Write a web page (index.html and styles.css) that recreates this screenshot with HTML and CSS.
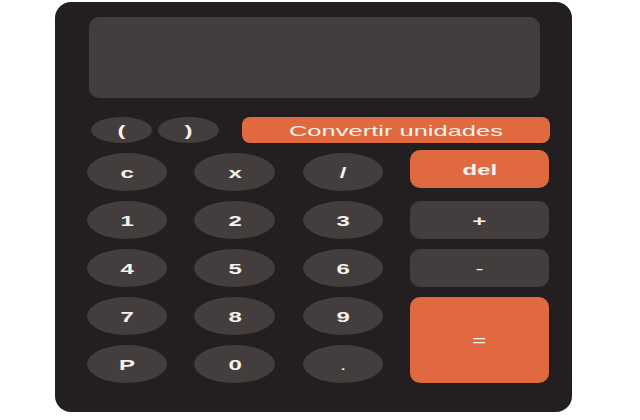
FILE: index.html
```html
<!DOCTYPE html>
<html lang="es">
<head>
<meta charset="utf-8">
<title>Calculadora</title>
<link rel="stylesheet" href="styles.css">
</head>
<body>
<div class="calc">
  <div class="display"></div>
  <div class="top-row">
    <button class="key paren"><span class="lbl">(</span></button>
    <button class="key paren"><span class="lbl">)</span></button>
    <button class="key convert"><span class="lbl">Convertir unidades</span></button>
  </div>
  <div class="keys">
    <button class="key round"><span class="lbl">c</span></button>
    <button class="key round"><span class="lbl">x</span></button>
    <button class="key round"><span class="lbl">/</span></button>
    <button class="key op accent del"><span class="lbl">del</span></button>
    <button class="key round"><span class="lbl">1</span></button>
    <button class="key round"><span class="lbl">2</span></button>
    <button class="key round"><span class="lbl">3</span></button>
    <button class="key op"><span class="lbl">+</span></button>
    <button class="key round"><span class="lbl">4</span></button>
    <button class="key round"><span class="lbl">5</span></button>
    <button class="key round"><span class="lbl">6</span></button>
    <button class="key op"><span class="lbl thin">-</span></button>
    <button class="key round"><span class="lbl">7</span></button>
    <button class="key round"><span class="lbl">8</span></button>
    <button class="key round"><span class="lbl">9</span></button>
    <button class="key op accent equals"><span class="lbl thin">=</span></button>
    <button class="key round"><span class="lbl">P</span></button>
    <button class="key round"><span class="lbl">0</span></button>
    <button class="key round"><span class="lbl thin">.</span></button>
  </div>
</div>
</body>
</html>
```
FILE: styles.css
```css
html, body {
  margin: 0;
  padding: 0;
  background: #ffffff;
}

body {
  font-family: "Liberation Sans", Arial, sans-serif;
}

.calc {
  box-sizing: border-box;
  width: 517px;
  height: 410px;
  margin: 2px 0 0 55px;
  padding: 15px 22px 0 32px;
  background: #231f20;
  border-radius: 16px;
}

.display {
  width: 451px;
  height: 81px;
  margin-left: 2px;
  background: #433e3d;
  border-radius: 10px;
}

.key {
  border: none;
  margin: 0;
  padding: 0;
  font-family: inherit;
  color: #f4f2ee;
  background: #433e3d;
  display: flex;
  align-items: center;
  justify-content: center;
  cursor: pointer;
}

.lbl {
  display: inline-block;
  font-size: 15px;
  font-weight: bold;
  line-height: 1;
  transform: scaleX(1.6);
}

.lbl.thin {
  font-weight: normal;
}

.top-row {
  display: flex;
  align-items: center;
  margin-top: 19px;
  padding-left: 4px;
  gap: 6px;
}

.paren {
  width: 61px;
  height: 26px;
  border-radius: 50%;
}

.convert {
  width: 308px;
  height: 26px;
  margin-left: 17px;
  background: #e0693f;
  border-radius: 8px;
}

.convert .lbl {
  font-weight: normal;
  transform: scaleX(1.7);
}

.keys {
  display: grid;
  grid-template-columns: 80px 81px 80px 139px;
  grid-auto-rows: 38px;
  column-gap: 27.4px;
  row-gap: 10px;
  margin-top: 10px;
}

.round {
  border-radius: 50%;
}

.op {
  border-radius: 10px;
}

.accent {
  background: #e0693f;
}

.del {
  margin-top: -3px;
  margin-bottom: 3px;
}

.equals {
  grid-row: span 2;
}
```
